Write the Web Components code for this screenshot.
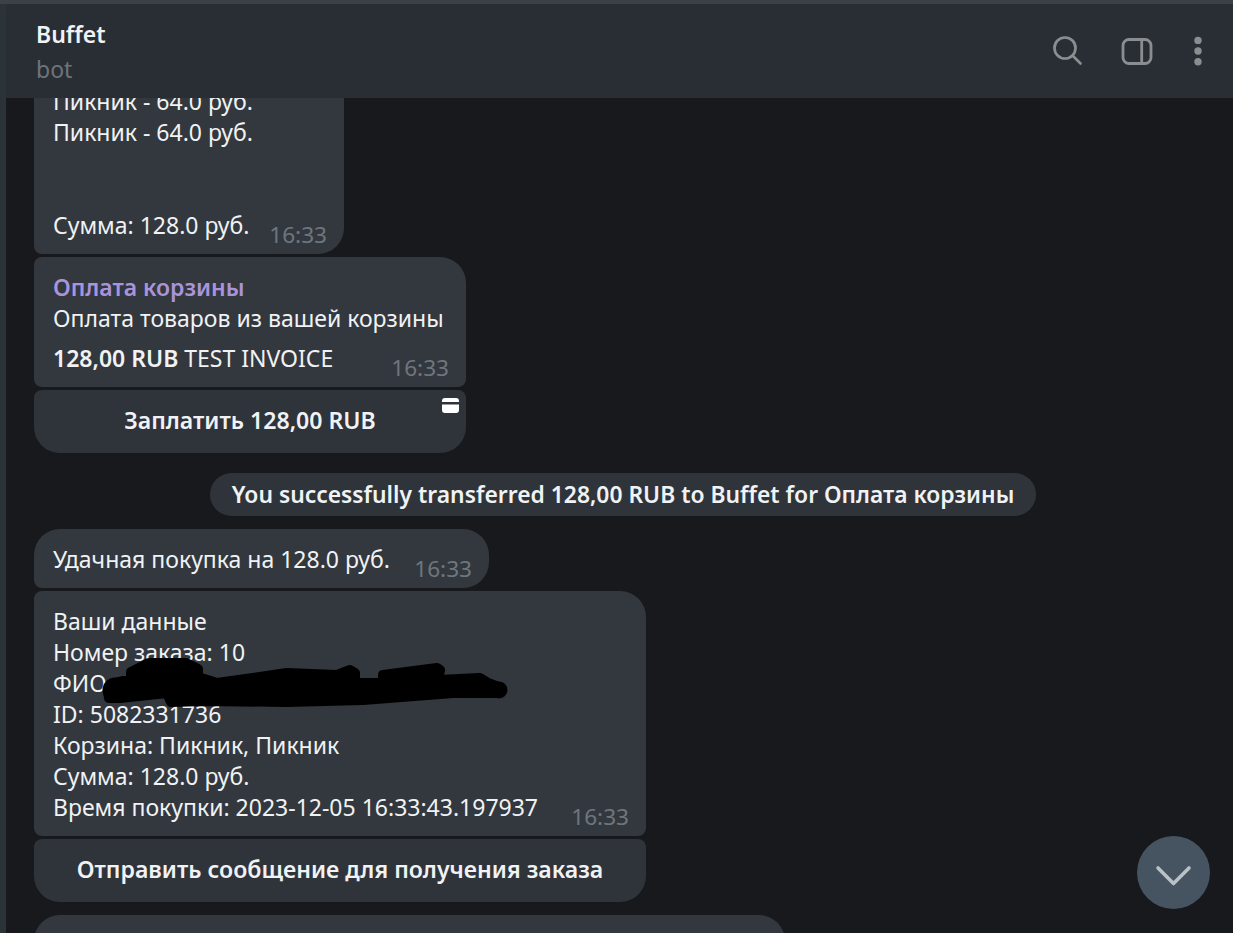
<!DOCTYPE html>
<html>
<head>
<meta charset="utf-8">
<style>
  html, body { margin: 0; height: 100%; background: #17191d; }
  body { font-family: "Noto Sans", "DejaVu Sans", sans-serif; font-size: 23px; color: #f0f2f4; overflow: hidden; }
</style>
</head>
<body>
<tg-app>
  <tg-header slot="header" title="Buffet" subtitle="bot"></tg-header>

  <tg-bubble w="310" time="16:33" radius="26px 26px 26px 8px" style="margin-top:-27px">
    Пикник - 64.0 руб.<br>Пикник - 64.0 руб.<br><br><br>Сумма: 128.0 руб.
  </tg-bubble>

  <tg-bubble w="432" time="16:33" radius="8px 26px 8px 8px">
    <tg-invoice title="Оплата корзины" text="Оплата товаров из вашей корзины" price="128,00 RUB" note="TEST INVOICE"></tg-invoice>
  </tg-bubble>
  <tg-button w="432" card>Заплатить 128,00 RUB</tg-button>

  <tg-service>You successfully transferred 128,00 RUB to Buffet for Оплата корзины</tg-service>

  <tg-bubble w="455" time="16:33" radius="26px 26px 26px 8px">Удачная покупка на 128.0 руб.</tg-bubble>

  <tg-bubble w="612" time="16:33" radius="8px 26px 8px 8px">
    Ваши данные<br>Номер заказа: 10<br>ФИО:<br>ID: 5082331736<br>Корзина: Пикник, Пикник<br>Сумма: 128.0 руб.<br>Время покупки: 2023-12-05 16:33:43.197937
    <svg slot="over" width="612" height="245" fill="#000">
      <path stroke="#000" stroke-width="10" stroke-linejoin="round" d="M74 99L80 92L97 88L97 81L115 72L152 72L164 78L164 86L183 92L219 87L253 82L303 84L316 79L321 82L321 92L349 92L349 84L403 77L406 79L404 89L446 87L454 92L462 95L468 99L462 102L419 102L329 109L253 111L170 110L137 111L133 102L86 107L75 107Z"/>
      <circle cx="81" cy="99" r="12.500"/>
      <circle cx="465" cy="99" r="8.500"/>
    </svg>
  </tg-bubble>
  <tg-button w="612">Отправить сообщение для получения заказа</tg-button>

  <tg-bubble w="751" radius="26px 26px 26px 8px" style="margin-top:10px;height:60px"></tg-bubble>

  <tg-fab slot="over"></tg-fab>
</tg-app>

<script>
function define(name, css, html, setup) {
  customElements.define(name, class extends HTMLElement {
    connectedCallback() {
      if (this.shadowRoot) return;
      this.attachShadow({ mode: 'open' });
      this.shadowRoot.innerHTML = '<style>' + css + '</style>' + (typeof html === 'function' ? html(this) : html);
      if (setup) setup(this);
    }
  });
}

define('tg-app', `
  :host { display: flex; flex-direction: column; height: 100vh; background: #2b3338; position: relative; overflow: hidden; }
  .strip { height: 4px; flex: none; background: #3b4147; }
  .body { flex: 1; min-height: 0; margin-left: 6px; display: flex; flex-direction: column; }
  .chat { flex: 1; min-height: 0; overflow: hidden; background: #17191d; padding-left: 28px;
          display: flex; flex-direction: column; align-items: flex-start; gap: 3px; }
`, `
  <div class="strip"></div>
  <div class="body">
    <slot name="header"></slot>
    <div class="chat"><slot></slot></div>
  </div>
  <slot name="over"></slot>
`);

define('tg-header', `
  :host { display: flex; flex: none; height: 94px; background: #292e34; align-items: center; justify-content: space-between; padding: 0 29.300px 0 30px; box-sizing: border-box; }
  .name { font-weight: 600; line-height: 31px; margin-top: 2px; }
  .sub { color: #6e7479; line-height: 31px; margin-top: 4px; }
  .tools { display: flex; align-items: center; gap: 38.500px; }
  svg { display: block; }
`, el => `
  <div>
    <div class="name">${el.getAttribute('title')}</div>
    <div class="sub">${el.getAttribute('subtitle')}</div>
  </div>
  <div class="tools">
    <svg width="30" height="30" viewBox="0 0 30 30" fill="none" stroke="#8b8e91" stroke-width="2.700" stroke-linecap="round">
      <circle cx="12" cy="12" r="10.500"/><path d="M20 20l7.500 7.500"/>
    </svg>
    <svg width="32" height="27" viewBox="0 0 32 27" fill="none" stroke="#8b8e91" stroke-width="2.800">
      <rect x="2" y="1.500" width="28" height="24" rx="6"/><path d="M20.700 1.500v24"/>
    </svg>
    <svg width="12" height="32" viewBox="0 0 12 32" fill="#8b8e91">
      <circle cx="6" cy="5.400" r="3.700"/><circle cx="6" cy="16" r="3.700"/><circle cx="6" cy="26.700" r="3.700"/>
    </svg>
  </div>
`);

define('tg-bubble', `
  :host { display: block; flex: none; position: relative; box-sizing: border-box; background: #33383f; line-height: 31px; padding: 14.500px 17px 13.500px 19px; white-space: nowrap; }
  .row { display: flex; align-items: flex-end; }
  .text { flex: 1; min-width: 0; }
  .time { color: #6e767d; flex: none; font-size: 22.600px; line-height: 31px; margin-bottom: -9px; }
  ::slotted(svg) { position: absolute; left: 0; top: 0; pointer-events: none; }
`, el => `
  <div class="row"><div class="text"><slot></slot></div>${el.hasAttribute('time') ? `<span class="time">${el.getAttribute('time')}</span>` : ''}</div>
  <slot name="over"></slot>
`, el => {
  el.style.width = el.getAttribute('w') + 'px';
  el.style.borderRadius = el.getAttribute('radius');
});

define('tg-invoice', `
  :host { display: block; }
  .title { color: #a994dc; font-weight: 600; }
  .price { margin-top: 9px; }
  b { font-weight: 600; }
`, el => `
  <div class="title">${el.getAttribute('title')}</div>
  <div>${el.getAttribute('text')}</div>
  <div class="price"><b>${el.getAttribute('price')}</b> ${el.getAttribute('note')}</div>
`);

define('tg-button', `
  :host { display: flex; flex: none; position: relative; box-sizing: border-box; height: 63px; align-items: center; justify-content: center;
          background: #2f343b; border-radius: 8px 8px 26px 26px; font-weight: 600; font-size: 23.100px; padding-bottom: 3px; }
  svg { position: absolute; top: 8px; right: 7px; }
`, el => `
  <slot></slot>
  ${el.hasAttribute('card') ? `<svg width="17" height="15" viewBox="0 0 17 15"><path fill="#fff" d="M3 0h11a3 3 0 0 1 3 3v1H0V3a3 3 0 0 1 3-3zM0 6.500h17V12a3 3 0 0 1-3 3H3a3 3 0 0 1-3-3z"/></svg>` : ''}
`, el => { el.style.width = el.getAttribute('w') + 'px'; });

define('tg-service', `
  :host { display: block; flex: none; align-self: flex-start; margin: 17px 0 10px 176px; height: 43px; line-height: 43px; box-sizing: border-box;
          width: 826px; text-align: center; white-space: nowrap; background: #2f343b; border-radius: 22px; font-weight: 600; font-size: 22.850px; }
`, `<slot></slot>`);

define('tg-fab', `
  :host { position: absolute; left: 1136.500px; top: 835.500px; width: 73px; height: 73px; border-radius: 50%; background: #465360; display: flex; align-items: center; justify-content: center; }
  svg { display: block; }
`, `
  <svg width="73" height="73" viewBox="0 0 73 73" fill="none" stroke="#b9c0c7" stroke-width="3.600" stroke-linecap="round" stroke-linejoin="round">
    <path d="M21 32l15.500 15.500L52 32"/>
  </svg>
`);
</script>
</body>
</html>
